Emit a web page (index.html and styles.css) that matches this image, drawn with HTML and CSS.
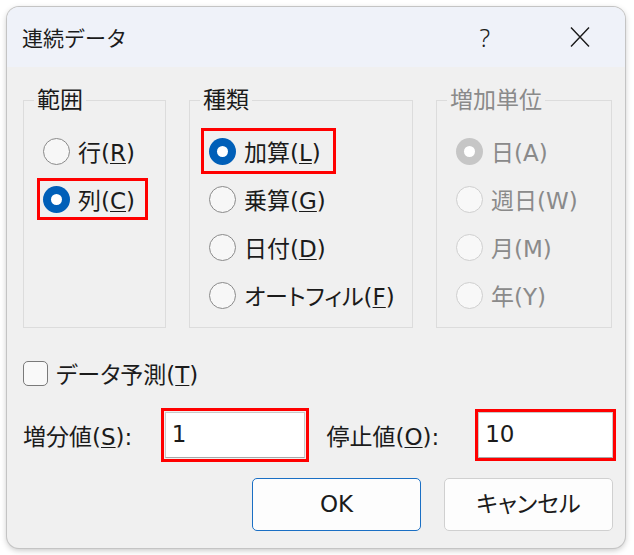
FILE: index.html
```html
<!DOCTYPE html>
<html lang="ja">
<head>
    <meta charset="UTF-8">
    <title>連続データ</title>
    <link rel="stylesheet" href="styles.css">
</head>
<body>
<div class="dialog">
    <div class="titlebar">
        <span class="title">連続データ</span>
        <span class="help">?</span>
        <span class="close">
            <svg width="20" height="22" viewBox="0 0 20 22"><path d="M1 1.5L19 20.5M19 1.5L1 20.5" stroke="#1a1a1a" stroke-width="1.4" fill="none"/></svg>
        </span>
    </div>
    <div class="content">
        <div class="groups">
            <fieldset class="grp grp-range">
                <legend>範囲</legend>
                <label class="radio"><span class="dot"></span><span>行(<u>R</u>)</span></label>
                <label class="radio mark"><span class="dot on"></span><span>列(<u>C</u>)</span></label>
            </fieldset>
            <fieldset class="grp grp-type">
                <legend>種類</legend>
                <label class="radio mark mark-wide"><span class="dot on"></span><span>加算(<u>L</u>)</span></label>
                <label class="radio"><span class="dot"></span><span>乗算(<u>G</u>)</span></label>
                <label class="radio"><span class="dot"></span><span>日付(<u>D</u>)</span></label>
                <label class="radio"><span class="dot"></span><span>オートフィル(<u>F</u>)</span></label>
            </fieldset>
            <fieldset class="grp grp-unit off">
                <legend>増加単位</legend>
                <label class="radio"><span class="dot on"></span><span>日(A)</span></label>
                <label class="radio"><span class="dot"></span><span>週日(W)</span></label>
                <label class="radio"><span class="dot"></span><span>月(M)</span></label>
                <label class="radio"><span class="dot"></span><span>年(Y)</span></label>
            </fieldset>
        </div>
        <label class="check"><span class="box"></span><span>データ予測(<u>T</u>)</span></label>
        <div class="values">
            <span class="lbl lbl-step">増分値(<u>S</u>):</span>
            <span class="input input-step mark">1</span>
            <span class="lbl lbl-stop">停止値(<u>O</u>):</span>
            <span class="input input-stop mark">10</span>
        </div>
        <div class="buttons">
            <div class="btn btn-ok">OK</div>
            <div class="btn">キャンセル</div>
        </div>
    </div>
</div>
</body>
</html>
```
FILE: styles.css
```css
*{
    margin:0;
    padding:0;
    box-sizing:border-box;
}
body{
    width:634px;
    height:555px;
    padding:7px 0 0 7px;
    background:#fff;
    font-family:"DejaVu Sans","Noto Sans CJK JP",sans-serif;
    font-size:23px;
    font-feature-settings:"palt";
    color:#1b1b1b;
    overflow:hidden;
}
u{
    text-underline-offset:2px;
    text-decoration-thickness:1px;
}
.dialog{
    width:618px;
    height:541px;
    background:#f0f0f0;
    border-radius:12px;
    overflow:hidden;
    box-shadow:0 0 0 1px #c4c4c4, 0 2px 6px rgba(0,0,0,.25);
}
.titlebar{
    height:60px;
    background:#eff2f9;
    display:flex;
    align-items:center;
    padding-left:15px;
}
.title{
    flex:1;
    font-family:"Noto Sans CJK JP",sans-serif;
    font-feature-settings:normal;
    font-size:21px;
    line-height:30px;
}
.help{
    font-family:"Noto Sans",sans-serif;
    font-size:25px;
    font-weight:300;
    margin-right:80px;
}
.close{
    width:20px;
    height:22px;
    margin-right:35px;
}
.close svg{
    display:block;
}
.content{
    padding:21px 12px 0 16px;
}
.groups{
    display:flex;
    gap:23px;
}
.grp{
    height:240px;
    border:1px solid #dcdcdc;
    padding:24px 0 0 19px;
    display:flex;
    flex-direction:column;
    gap:18px;
}
.grp legend{
    margin-left:-9px;
    padding:0 3px;
    line-height:24px;
}
.grp-range{
    width:143px;
}
.grp-type{
    width:224px;
}
.grp-unit{
    width:176px;
}
.radio{
    display:flex;
    align-items:center;
    width:fit-content;
    height:30px;
    gap:8px;
    white-space:nowrap;
}
.dot{
    width:27px;
    height:27px;
    border-radius:50%;
    border:1px solid #8a8a8a;
    background:#f7f7f7;
    position:relative;
}
.dot.on{
    border:none;
    background:#005fb8;
}
.dot.on::after{
    content:"";
    position:absolute;
    left:8px;
    top:8px;
    width:11px;
    height:11px;
    border-radius:50%;
    background:#fff;
}
.off{
    color:#8a8a8a;
}
.off .dot{
    border-color:#cfcfcf;
    background:#f8f8f8;
}
.off .dot.on{
    background:#c6c6c6;
}
.mark{
    outline:3px solid #f00;
    outline-offset:3px;
    padding-right:7px;
}
.mark-wide{
    outline-offset:5px;
}
.check{
    display:flex;
    align-items:center;
    gap:8px;
    height:30px;
    margin-top:30px;
}
.box{
    width:25px;
    height:25px;
    border:1px solid #7a7a7a;
    border-radius:5px;
    background:#f9f9f9;
}
.values{
    display:flex;
    align-items:center;
    height:48px;
    margin-top:23px;
}
.input{
    height:46px;
    line-height:42px;
    background:#fff;
    border:1px solid #c9c9c9;
    border-bottom-color:#a8a8a8;
    padding-left:6px;
}
.lbl-step{
    width:142px;
}
.input-step{
    width:140px;
    outline-offset:1px;
    padding-right:0;
}
.lbl-stop{
    margin-left:22px;
    width:152px;
}
.input-stop{
    width:135px;
    outline-offset:0;
    padding-right:0;
}
.buttons{
    display:flex;
    justify-content:flex-end;
    gap:23px;
    margin-top:19px;
}
.btn{
    width:169px;
    height:53px;
    line-height:51px;
    text-align:center;
    background:#fdfdfd;
    border:1px solid #d0d0d0;
    border-radius:5px;
}
.btn-ok{
    border-color:#1a6fc4;
}
```
